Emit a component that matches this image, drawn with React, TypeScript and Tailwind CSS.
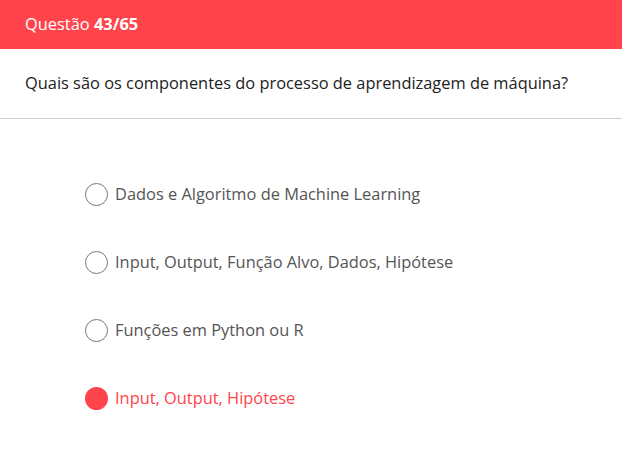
import React from "react";

const options = [
  { label: "Dados e Algoritmo de Machine Learning", selected: false },
  { label: "Input, Output, Função Alvo, Dados, Hipótese", selected: false },
  { label: "Funções em Python ou R", selected: false },
  { label: "Input, Output, Hipótese", selected: true },
];

export default function App() {
  return (
    <div
      className="w-[622px] h-[467px] bg-white"
      style={{ fontFamily: '"Open Sans", "Noto Sans", sans-serif' }}
    >
      <div className="h-[49px] bg-[#ff444b] flex items-center px-[25px] text-white text-[16.4px]">
        <span>
          Questão <span className="font-bold">43/65</span>
        </span>
      </div>
      <div className="h-[70px] flex items-center px-[25px] text-[#222] text-[16.4px] border-b border-[#cfcfcf]">
        Quais são os componentes do processo de aprendizagem de máquina?
      </div>
      <div className="flex flex-col gap-[46px] pl-[85px] pt-[64px]">
        {options.map((o) => (
          <div key={o.label} className="flex items-center h-[22px] gap-[7px]">
            {o.selected ? (
              <div className="w-[23px] h-[23px] rounded-full bg-[#ff444b]" />
            ) : (
              <div className="w-[23px] h-[23px] rounded-full border border-[#777]" />
            )}
            <span
              className={
                "text-[16.4px] " + (o.selected ? "text-[#ff444b]" : "text-[#555]")
              }
            >
              {o.label}
            </span>
          </div>
        ))}
      </div>
    </div>
  );
}
